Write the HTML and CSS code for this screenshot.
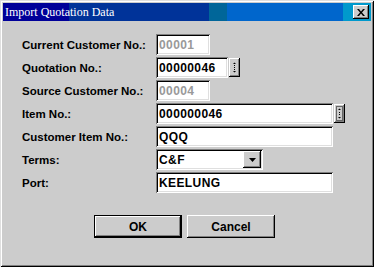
FILE: index.html
```html
<!DOCTYPE html>
<html>
<head>
    <meta charset="UTF-8">
    <title>Import Quotation Data</title>
    <link rel="stylesheet" href="styles.css">
</head>
<body>
    <div class="window">
        <div class="titlebar">
            <span class="title">Import Quotation Data</span>
            <button class="close-btn">
                <svg width="8" height="7" viewBox="0 0 8 7">
                    <path d="M0 0h2l2 2.5L6 0h2L5 3.5 8 7H6L4 4.5 2 7H0l3-3.5z" fill="#000"/>
                </svg>
            </button>
        </div>

        <div class="form-grid">
            <label>Current Customer No.:</label>
            <div class="field-row">
                <div class="field disabled w-short">00001</div>
            </div>

            <label>Quotation No.:</label>
            <div class="field-row">
                <div class="field w-mid">00000046</div>
                <div class="spin">
                    <svg width="11" height="19" viewBox="0 0 11 19">
                        <path d="M4 6h3L5.5 4.5z M4 13h3L5.5 14.5z" fill="#000"/>
                        <rect x="5" y="7" width="1" height="1" fill="#000"/>
                        <rect x="5" y="9" width="1" height="1" fill="#000"/>
                        <rect x="5" y="11" width="1" height="1" fill="#000"/>
                    </svg>
                </div>
            </div>

            <label>Source Customer No.:</label>
            <div class="field-row">
                <div class="field disabled w-short">00004</div>
            </div>

            <label>Item No.:</label>
            <div class="field-row">
                <div class="field w-long">000000046</div>
                <div class="spin">
                    <svg width="11" height="19" viewBox="0 0 11 19">
                        <rect x="2.5" y="2.5" width="6" height="14" fill="none" stroke="#000" stroke-dasharray="1 1"/>
                        <path d="M4 6h3L5.5 4.5z M4 13h3L5.5 14.5z" fill="#000"/>
                        <rect x="5" y="8" width="1" height="1" fill="#000"/>
                        <rect x="5" y="10" width="1" height="1" fill="#000"/>
                    </svg>
                </div>
            </div>

            <label>Customer Item No.:</label>
            <div class="field-row">
                <div class="field w-long">QQQ</div>
            </div>

            <label>Terms:</label>
            <div class="field-row">
                <div class="field combo">
                    <span>C&amp;F</span>
                    <span class="drop-btn">
                        <svg width="7" height="4" viewBox="0 0 7 4">
                            <path d="M0 0h7L3.5 4z" fill="#000"/>
                        </svg>
                    </span>
                </div>
            </div>

            <label>Port:</label>
            <div class="field-row">
                <div class="field w-long">KEELUNG</div>
            </div>
        </div>

        <div class="button-row">
            <button class="btn default">OK</button>
            <button class="btn">Cancel</button>
        </div>
    </div>
</body>
</html>
```

FILE: styles.css
```css
* {
    box-sizing: border-box;
}

body {
    margin: 0;
    background: #cccccc;
}

.window {
    width: 374px;
    height: 267px;
    padding: 3px;
    background: #cccccc;
    box-shadow: inset 1px 1px #dfdfdf, inset -1px -1px #000,
                inset 2px 2px #fff, inset -2px -2px #808080;
    font-family: "Liberation Sans", Arial, sans-serif;
}

.titlebar {
    height: 18px;
    display: flex;
    align-items: center;
    justify-content: space-between;
    padding-left: 2px;
    padding-right: 2px;
    background: linear-gradient(to right,
        #000099 0, #000099 66px,
        #003399 66px, #003399 206px,
        #006699 206px, #006699 224px,
        #0066cc 224px, #0066cc 340px,
        #0099cc 340px);
}

.title {
    font-family: "Liberation Serif", "Times New Roman", serif;
    font-size: 12px;
    color: white;
    padding-left: 0;
}

.close-btn {
    width: 16px;
    height: 14px;
    padding: 0;
    border: none;
    background: #cccccc;
    display: flex;
    align-items: center;
    justify-content: center;
    box-shadow: inset -1px -1px #000, inset 1px 1px #fff, inset -2px -2px #808080;
}

.form-grid {
    display: grid;
    grid-template-columns: 134px auto;
    grid-auto-rows: 21px;
    row-gap: 2px;
    margin-top: 13px;
    padding-left: 19px;
}

.form-grid label {
    display: flex;
    align-items: center;
    font-weight: bold;
    font-size: 11.5px;
    color: #000;
}

.field-row {
    display: flex;
    align-items: center;
    gap: 1px;
}

.field {
    height: 21px;
    padding: 0 3px;
    display: flex;
    align-items: center;
    background: #fff;
    font-weight: bold;
    font-size: 12px;
    letter-spacing: 0.4px;
    color: #000;
    box-shadow: inset 1px 1px #808080, inset -1px -1px #fff,
                inset 2px 2px #000, inset -2px -2px #dfdfdf;
}

.field.disabled {
    color: #999999;
}

.w-short {
    width: 54px;
}

.w-mid {
    width: 72px;
}

.w-long {
    width: 177px;
}

.spin {
    width: 11px;
    height: 19px;
    background: #cccccc;
    box-shadow: inset -1px -1px #000, inset 1px 1px #fff, inset -2px -2px #808080;
}

.spin svg {
    display: block;
}

.combo {
    width: 107px;
    height: 21px;
    padding-right: 2px;
    justify-content: space-between;
}

.drop-btn {
    width: 18px;
    height: 17px;
    display: flex;
    align-items: center;
    justify-content: center;
    background: #cccccc;
    box-shadow: inset -1px -1px #000, inset 1px 1px #fff, inset -2px -2px #808080;
}

.button-row {
    display: flex;
    gap: 5px;
    margin-top: 22px;
    padding-left: 91px;
}

.btn {
    width: 88px;
    height: 23px;
    padding: 0;
    border: none;
    background: #cccccc;
    font-family: "Liberation Sans", Arial, sans-serif;
    font-weight: bold;
    font-size: 12px;
    color: #000;
    box-shadow: inset -1px -1px #000, inset 1px 1px #fff, inset -2px -2px #808080;
}

.btn.default {
    box-shadow: inset 0 0 0 1px #000, inset -2px -2px #000,
                inset 2px 2px #fff, inset -3px -3px #808080;
}
```
